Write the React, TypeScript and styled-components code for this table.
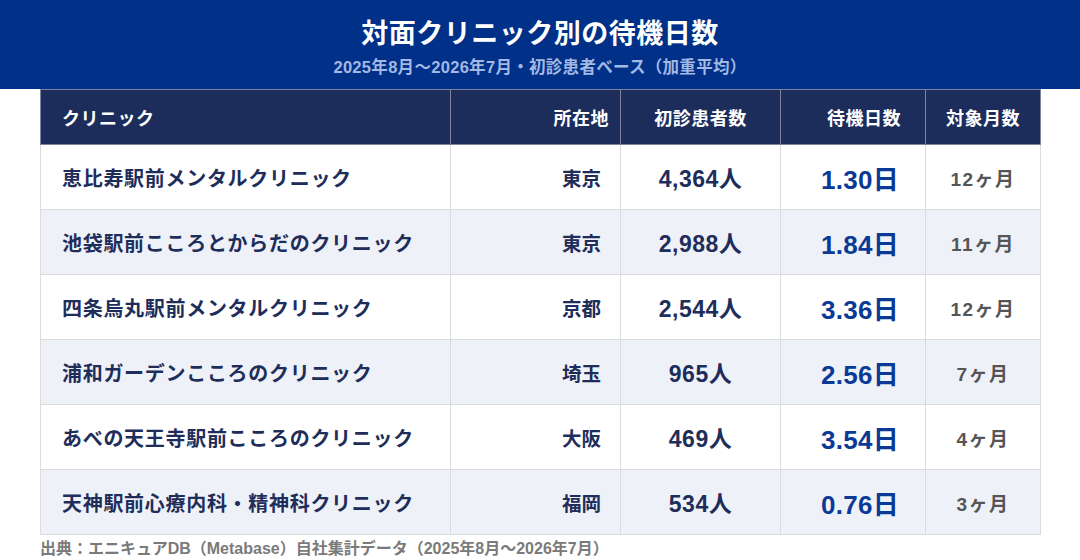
import React from "react";
import styled, { createGlobalStyle } from "styled-components";

const GlobalStyle = createGlobalStyle`
  html, body { margin: 0; padding: 0; background: #ffffff; }
  body {
    font-family: "Liberation Sans", "Noto Sans CJK JP", sans-serif;
    -webkit-font-smoothing: antialiased;
  }
`;

const Page = styled.div`
  width: 1080px;
  height: 560px;
  display: flex;
  flex-direction: column;
  overflow: hidden;
`;

const Banner = styled.header`
  height: 89px;
  box-sizing: border-box;
  padding-top: 16px;
  background: #003088;
  display: flex;
  flex-direction: column;
  align-items: center;
`;

const Title = styled.h1`
  margin: 0;
  font-size: 27px;
  line-height: 36px;
  font-weight: 700;
  color: #ffffff;
  letter-spacing: 0.5px;
`;

const Subtitle = styled.div`
  margin-top: 4px;
  font-size: 16.5px;
  line-height: 22px;
  font-weight: 700;
  color: #a3b8e3;
  letter-spacing: 0.3px;
`;

const Body = styled.main`
  padding: 0 40px;
  display: flex;
  flex-direction: column;
`;

const Table = styled.table`
  width: 1000px;
  border-collapse: collapse;
  table-layout: fixed;
  border: 1px solid #dcdcdc;
`;

type Align = "left" | "right" | "center";

const Th = styled.th<{ $align: Align; $pad: string }>`
  height: 55px;
  box-sizing: border-box;
  background: #1c2d5b;
  color: #ffffff;
  font-size: 18px;
  font-weight: 700;
  text-align: ${(p) => p.$align};
  padding: ${(p) => p.$pad};
  border: 1px solid #7d849d;
  letter-spacing: 0.5px;
`;

const Tr = styled.tr<{ $alt: boolean }>`
  background: ${(p) => (p.$alt ? "#eef2f8" : "#ffffff")};
`;

const Td = styled.td<{ $align: Align; $pad: string }>`
  height: 65px;
  box-sizing: border-box;
  text-align: ${(p) => p.$align};
  padding: ${(p) => p.$pad};
  border: 1px solid #dcdcdc;
  font-weight: 700;
  white-space: nowrap;
`;

const ClinicName = styled.span`
  font-size: 20px;
  color: #1e2d5a;
  letter-spacing: 0.7px;
`;

const Place = styled.span`
  font-size: 19.5px;
  color: #1e2d5a;
`;

const Patients = styled.span`
  font-size: 23px;
  color: #1e2d5a;
  letter-spacing: 0.5px;
`;

const Wait = styled.span`
  font-size: 26px;
  color: #0b3a96;
  letter-spacing: 0.3px;
`;

const Months = styled.span`
  font-size: 19px;
  color: #555555;
  letter-spacing: 1.5px;
`;

const Footer = styled.div`
  margin-top: 5px;
  font-size: 16px;
  line-height: 18px;
  font-weight: 700;
  color: #7a7a7a;
`;

const rows = [
  { name: "恵比寿駅前メンタルクリニック", place: "東京", patients: "4,364人", wait: "1.30日", months: "12ヶ月" },
  { name: "池袋駅前こころとからだのクリニック", place: "東京", patients: "2,988人", wait: "1.84日", months: "11ヶ月" },
  { name: "四条烏丸駅前メンタルクリニック", place: "京都", patients: "2,544人", wait: "3.36日", months: "12ヶ月" },
  { name: "浦和ガーデンこころのクリニック", place: "埼玉", patients: "965人", wait: "2.56日", months: "7ヶ月" },
  { name: "あべの天王寺駅前こころのクリニック", place: "大阪", patients: "469人", wait: "3.54日", months: "4ヶ月" },
  { name: "天神駅前心療内科・精神科クリニック", place: "福岡", patients: "534人", wait: "0.76日", months: "3ヶ月" },
];

export default function App() {
  return (
    <>
      <GlobalStyle />
      <Page>
        <Banner>
          <Title>対面クリニック別の待機日数</Title>
          <Subtitle>2025年8月〜2026年7月・初診患者ベース（加重平均）</Subtitle>
        </Banner>
        <Body>
          <Table>
            <colgroup>
              <col style={{ width: 410 }} />
              <col style={{ width: 170 }} />
              <col style={{ width: 160 }} />
              <col style={{ width: 145 }} />
              <col style={{ width: 115 }} />
            </colgroup>
            <thead>
              <tr>
                <Th $align="left" $pad="0 0 0 21px">クリニック</Th>
                <Th $align="right" $pad="0 11px 0 0">所在地</Th>
                <Th $align="center" $pad="0">初診患者数</Th>
                <Th $align="right" $pad="0 24px 0 0">待機日数</Th>
                <Th $align="center" $pad="0">対象月数</Th>
              </tr>
            </thead>
            <tbody>
              {rows.map((r, i) => (
                <Tr key={r.name} $alt={i % 2 === 1}>
                  <Td $align="left" $pad="0 0 0 21px">
                    <ClinicName>{r.name}</ClinicName>
                  </Td>
                  <Td $align="right" $pad="0 19px 0 0">
                    <Place>{r.place}</Place>
                  </Td>
                  <Td $align="center" $pad="0">
                    <Patients>{r.patients}</Patients>
                  </Td>
                  <Td $align="right" $pad="0 26px 0 0">
                    <Wait>{r.wait}</Wait>
                  </Td>
                  <Td $align="center" $pad="0">
                    <Months>{r.months}</Months>
                  </Td>
                </Tr>
              ))}
            </tbody>
          </Table>
          <Footer>出典：エニキュアDB（Metabase）自社集計データ（2025年8月〜2026年7月）</Footer>
        </Body>
      </Page>
    </>
  );
}
